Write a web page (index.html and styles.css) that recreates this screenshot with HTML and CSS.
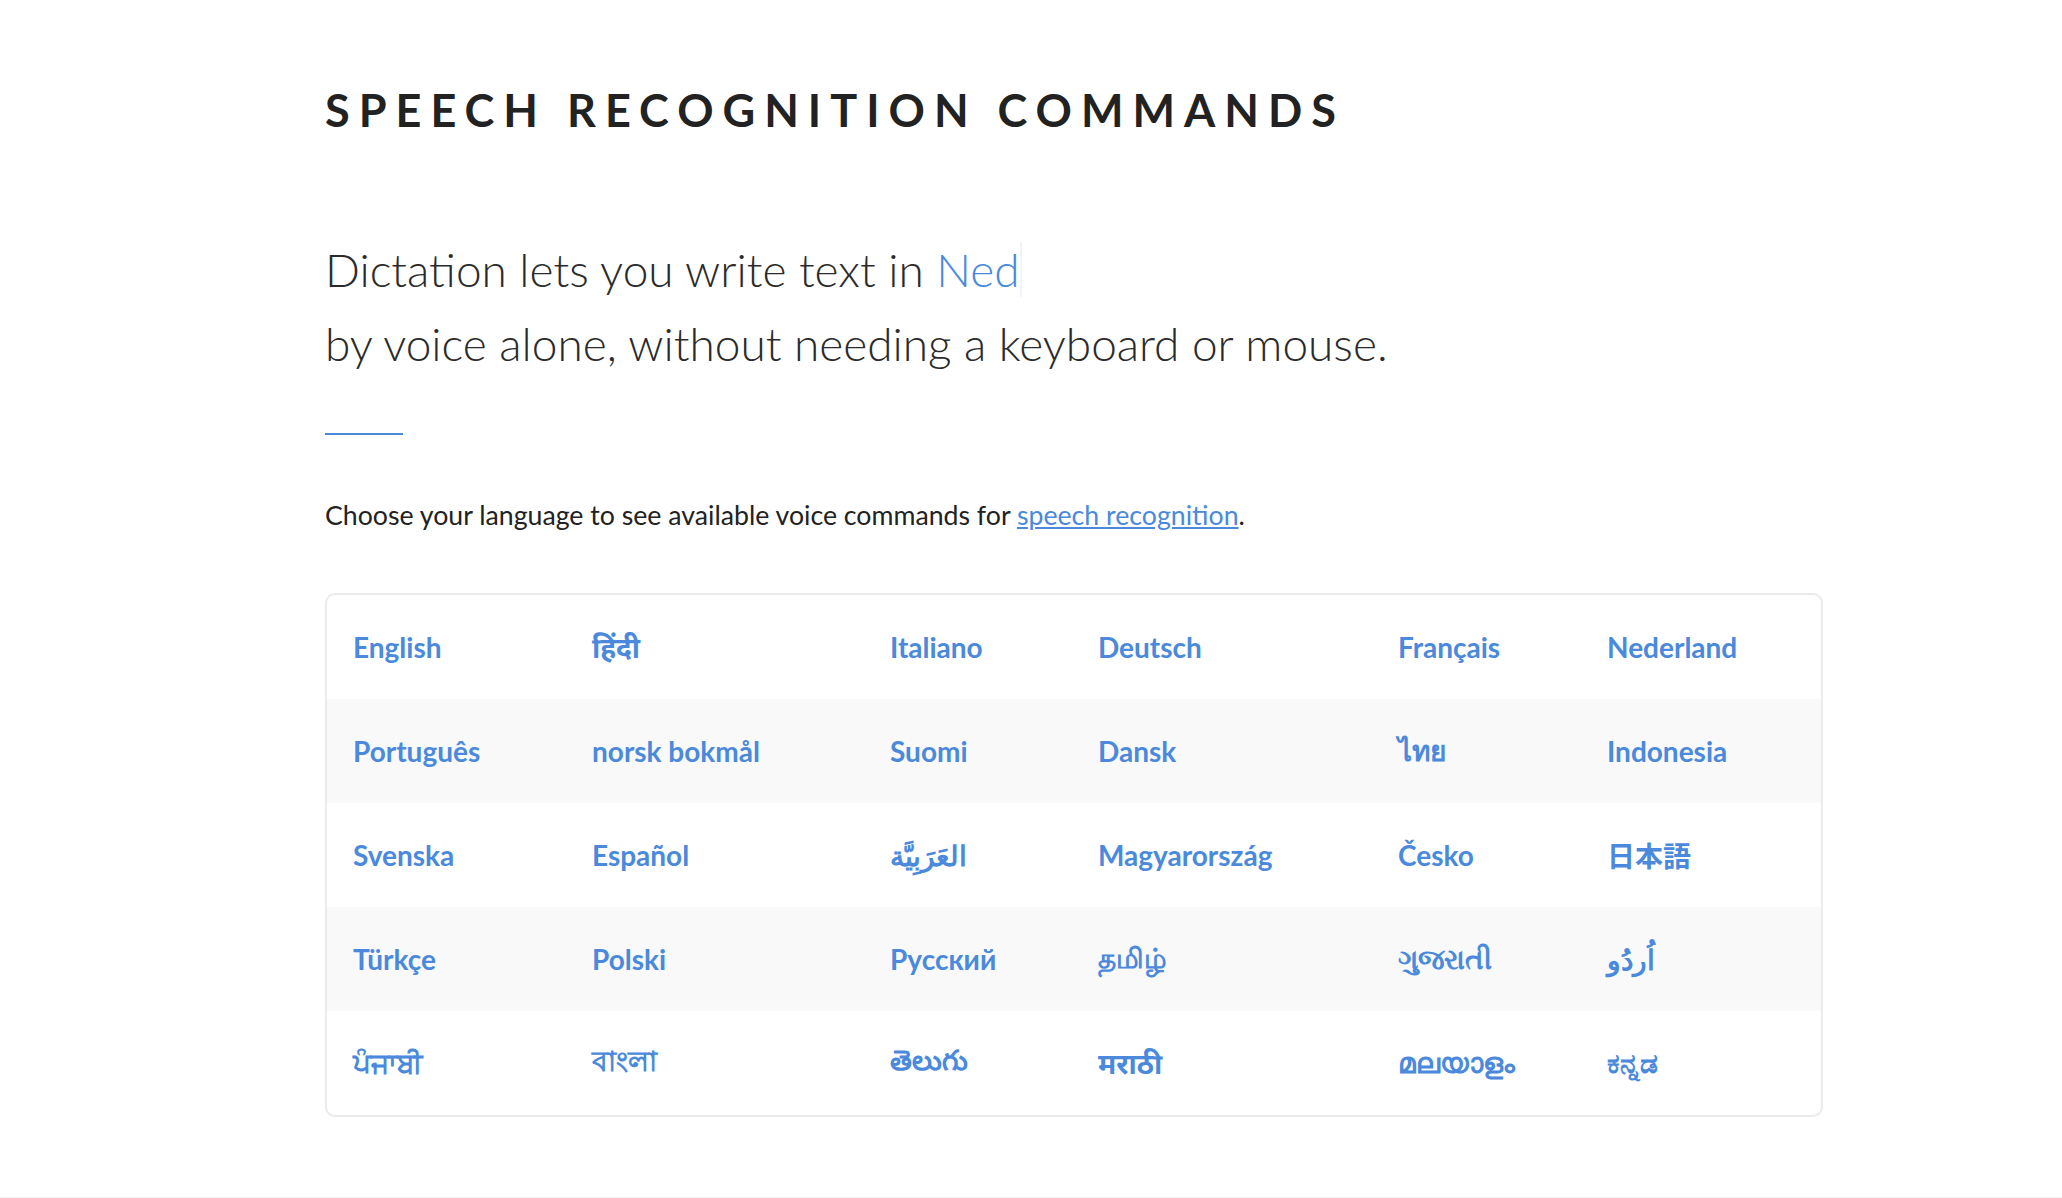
FILE: index.html
```html
<!DOCTYPE html>
<html lang="en">
<head>
  <meta charset="UTF-8">
  <meta name="viewport" content="width=device-width, initial-scale=1.0">
  <title>Speech Recognition Commands</title>
  <link rel="stylesheet" href="styles.css">
</head>
<body>
  <div class="pagina">
    <h1 class="titulo">Speech Recognition Commands</h1>

    <!-- Frase de introducao com o nome da lingua digitando -->
    <p class="intro">
      Dictation lets you write text in <span class="digitando">Ned</span><br>
      by voice alone, without needing a keyboard or mouse.
    </p>

    <div class="traco"></div>

    <p class="escolha">Choose your language to see available voice commands for <a href="#">speech recognition</a>.</p>

    <!-- Grade de linguas -->
    <div class="linguas">
      <div class="linha">
        <a href="#" lang="en">English</a>
        <a href="#" lang="hi">हिंदी</a>
        <a href="#" lang="it">Italiano</a>
        <a href="#" lang="de">Deutsch</a>
        <a href="#" lang="fr">Français</a>
        <a href="#" lang="nl">Nederland</a>
      </div>
      <div class="linha">
        <a href="#" lang="pt">Português</a>
        <a href="#" lang="nb">norsk bokmål</a>
        <a href="#" lang="fi">Suomi</a>
        <a href="#" lang="da">Dansk</a>
        <a href="#" lang="th">ไทย</a>
        <a href="#" lang="id">Indonesia</a>
      </div>
      <div class="linha">
        <a href="#" lang="sv">Svenska</a>
        <a href="#" lang="es">Español</a>
        <a href="#" lang="ar">العَرَبِيَّة</a>
        <a href="#" lang="hu">Magyarország</a>
        <a href="#" lang="cs">Česko</a>
        <a href="#" lang="ja">日本語</a>
      </div>
      <div class="linha">
        <a href="#" lang="tr">Türkçe</a>
        <a href="#" lang="pl">Polski</a>
        <a href="#" lang="ru">Русский</a>
        <a href="#" lang="ta">தமிழ்</a>
        <a href="#" lang="gu">ગુજરાતી</a>
        <a href="#" lang="ur">اُردُو</a>
      </div>
      <div class="linha">
        <a href="#" lang="pa">ਪੰਜਾਬੀ</a>
        <a href="#" lang="bn">বাংলা</a>
        <a href="#" lang="te">తెలుగు</a>
        <a href="#" lang="mr">मराठी</a>
        <a href="#" lang="ml">മലയാളം</a>
        <a href="#" lang="kn">ಕನ್ನಡ</a>
      </div>
    </div>
  </div>

  <div id="rodape"></div>
</body>
</html>
```

FILE: styles.css
```css
body {
  margin: 0;
  padding: 0;
  font-family: "Lato", "Noto Sans", "Noto Sans CJK JP", sans-serif;
  color: #2b2b2b;
  background: #fff;
}

.pagina {
  width: 1498px;
  margin-left: 325px;
  padding-top: 80px;
}

.titulo {
  margin: 0;
  font-size: 45px;
  line-height: 60px;
  font-weight: 700;
  text-transform: uppercase;
  letter-spacing: 9px;
  color: #222;
}

/* Frase grande em fonte fina */
.intro {
  margin: 93px 0 0;
  font-size: 46px;
  line-height: 74px;
  font-weight: 300;
  color: #2b2b2b;
}

.digitando {
  color: #4a89dc;
  border-right: 2px solid #f1f5fb;
}

.traco {
  width: 78px;
  height: 2px;
  margin-top: 52px;
  background: #4a89dc;
}

.escolha {
  margin: 60px 0 0;
  font-size: 26.7px;
  line-height: 40px;
  color: #222;
}

.escolha a {
  color: #4a89dc;
  text-decoration: underline;
}

.linguas {
  margin-top: 58px;
  border: 2px solid #ebebeb;
  border-radius: 10px;
  overflow: hidden;
}

.linha {
  display: grid;
  grid-template-columns: 239px 298px 208px 300px 209px 1fr;
  height: 104px;
  align-items: center;
}

.linha:nth-child(even) {
  background: #f9f9f9;
}

.linha a {
  padding-left: 26px;
  font-size: 28px;
  font-weight: 700;
  color: #4a89dc;
  text-decoration: none;
}

#rodape {
  margin-top: 80px;
  border-top: 2px solid #eeeeee;
  height: 40px;
}
```
